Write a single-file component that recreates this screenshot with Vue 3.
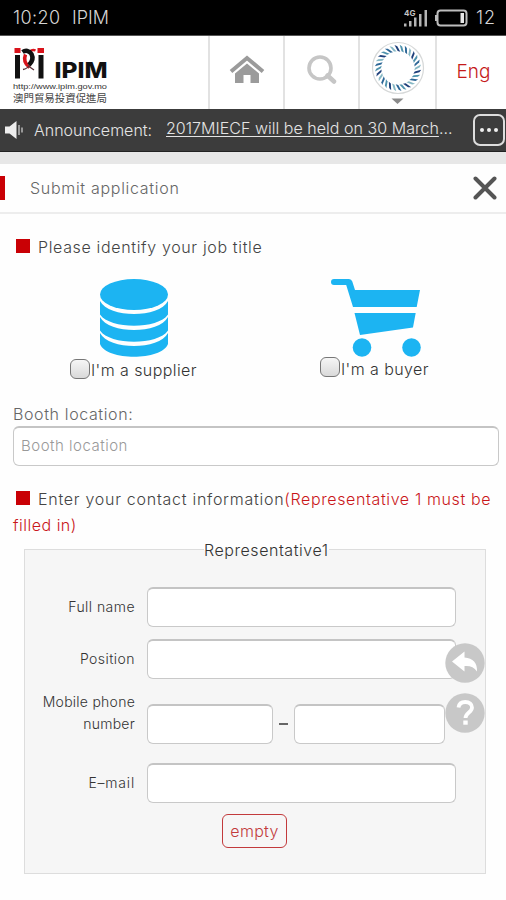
<script setup>
import { ref } from 'vue'

const booth = ref('')
const blades = Array.from({ length: 28 }, (_, i) => ({
  angle: (i * 360) / 28,
  tone: ['#1d3f7a', '#4f93ad', '#2c6696', '#86b8c4'][i % 4],
}))
</script>

<template>
  <div class="screen">
    <div class="status">
      <span class="clock">10:20</span>
      <span class="app">IPIM</span>
      <svg class="signal" width="26" height="20" viewBox="0 0 26 20">
        <text x="1" y="7.5" class="net">4G</text>
        <g fill="#b4b4b4">
          <rect x="1" y="15.500" width="2.500" height="3" />
          <rect x="6" y="13" width="2.500" height="5.500" />
          <rect x="11" y="9.500" width="2.500" height="9" />
          <rect x="16" y="6" width="2.500" height="12.500" />
          <rect x="21.500" y="2" width="2.500" height="16.500" />
        </g>
      </svg>
      <svg class="battery" width="33" height="18" viewBox="0 0 33 18">
        <rect x="2.5" y="1.5" width="29" height="15" rx="3" fill="none" stroke="#bdbdbd" stroke-width="2" />
        <rect x="0" y="6" width="2" height="6" fill="#bdbdbd" />
        <rect x="25.5" y="4" width="3.5" height="10" fill="#e8e8e8" />
      </svg>
      <span class="level">12</span>
    </div>

    <header class="header">
      <div class="brand">
        <svg width="98" height="58" viewBox="0 0 98 58">
          <g fill="#111">
            <rect x="2" y="8" width="5" height="23.500" />
            <rect x="25.500" y="8" width="5" height="23.500" />
          </g>
          <g fill="#d9131b">
            <rect x="1.500" y="1" width="6" height="5" />
            <rect x="24.500" y="1" width="6.500" height="5" />
          </g>
          <path d="M22.500 3.500q-3-1.500-5.500 1" stroke="#d9131b" stroke-width="2.500" fill="none" />
          <path d="M12.500 7.500c-2 5-1 9 4 13" stroke="#d9131b" stroke-width="3.500" fill="none" />
          <path d="M9.500 5c3-2 7-1.500 9 2 2 4 1.500 7-2.500 11" stroke="#111" stroke-width="4.500" fill="none" />
          <path d="M10 22.500q4-.5 6.500-4.500M16 19.500l5 3.500" stroke="#5a3038" stroke-width="1.300" fill="none" />
          <text x="41.500" y="31" class="brand-name" textLength="53" lengthAdjust="spacingAndGlyphs">IPIM</text>
          <text x="0" y="41.500" class="brand-url" textLength="94" lengthAdjust="spacingAndGlyphs">http://www.ipim.gov.mo</text>
          <text x="0" y="54.500" class="brand-zh" textLength="94" lengthAdjust="spacingAndGlyphs">澳門貿易投資促進局</text>
        </svg>
      </div>
      <div class="cell home">
        <svg width="36" height="29" viewBox="0 0 36 29">
          <path d="M2 16.500L18 3l16 13.500" fill="none" stroke="#9b9b9b" stroke-width="4" />
          <path d="M6 18.500L18 8.500l12 10V28h-8.500v-8h-7v8H6z" fill="#9b9b9b" />
        </svg>
      </div>
      <div class="cell find">
        <svg width="30" height="30" viewBox="0 0 30 30">
          <circle cx="13" cy="13" r="11" fill="none" stroke="#c6c6c6" stroke-width="3.600" />
          <path d="M20.500 20.500l6.500 6" stroke="#c6c6c6" stroke-width="4.500" stroke-linecap="round" />
        </svg>
      </div>
      <div class="cell member">
        <svg width="54" height="66" viewBox="0 0 54 66">
          <circle cx="27" cy="27" r="25.500" fill="#fff" stroke="#d6d8d8" stroke-width="1.200" />
          <g v-for="b in blades" :key="b.angle" :transform="`rotate(${b.angle} 27 27)`">
            <path d="M23.500 4l2.800 1.200 3 5.500-2.600-.8z" :fill="b.tone" />
          </g>
          <path d="M20.500 57.500h12L26.500 63z" fill="#8a8a8a" />
        </svg>
      </div>
      <div class="cell lang">Eng</div>
    </header>

    <div class="notice">
      <svg class="speaker" width="20" height="20" viewBox="0 0 20 20">
        <path d="M0 6.500h4.500L11.500 1v18l-7-5.500H0z" fill="#eee" />
        <path d="M14 5v10M17 7.500v5" stroke="#aaa" stroke-width="1.700" />
      </svg>
      <span class="notice-label">Announcement:</span>
      <span class="notice-link"><u>2017MIECF will be held on 30 March</u>...</span>
      <span class="more"><i></i><i></i><i></i></span>
    </div>

    <div class="band"></div>

    <div class="title">
      <span class="marker"></span>
      <span class="title-text">Submit application</span>
      <svg class="close" width="24" height="24" viewBox="0 0 24 24">
        <path d="M2.500 2.500l19 19M21.500 2.500l-19 19" stroke="#555" stroke-width="4" stroke-linecap="round" />
      </svg>
    </div>

    <main class="content">
      <div class="heading"><span class="square"></span><span class="h-job">Please identify your job title</span></div>

      <div class="roles">
        <div class="role supplier">
          <svg width="68" height="78" viewBox="0 0 68 78">
            <g fill="#1cb4f2">
              <ellipse cx="34" cy="15.500" rx="34" ry="15.500" />
              <path d="M0 22C9 39.300 59 39.300 68 22v13.500C58 50.500 10 50.500 0 35.500z" />
              <path d="M0 38C9 55.300 59 55.300 68 38v13.500C58 66.500 10 66.500 0 51.500z" />
              <path d="M0 54C9 71.300 59 71.300 68 54v11C62 82 6 82 0 65z" />
            </g>
          </svg>
          <label class="option"><span class="box"></span><span class="supplier-text">I'm a supplier</span></label>
        </div>
        <div class="role buyer">
          <svg width="90" height="78" viewBox="0 0 90 78">
            <g fill="#1cb4f2">
              <path d="M3 0h15q2.500 0 3.300 2.500L24 11h65l-3.300 17H22L15.200 6H3a3 3 0 0 1 0-6z" />
              <path d="M23.500 34h61.200L82 48.500 29 56z" />
              <circle cx="31" cy="68.500" r="9.300" />
              <circle cx="80.500" cy="68.500" r="9.300" />
            </g>
          </svg>
          <label class="option"><span class="box"></span><span class="buyer-text">I'm a buyer</span></label>
        </div>
      </div>

      <label class="booth">
        <span class="booth-label">Booth location:</span>
        <input v-model="booth" class="field booth-input" placeholder="Booth location" />
      </label>

      <div class="heading contact">
        <span class="square"></span><span class="h-contact">Enter your contact information</span><span class="red r-one">(Representative 1 must be</span>
        <div class="red r-two">filled in)</div>
      </div>

      <section class="panel">
        <div class="legend"><span>Representative1</span></div>
        <div class="row name"><span class="label l-name">Full name</span><input class="field wide" /></div>
        <div class="row position"><span class="label l-position">Position</span><input class="field wide" /></div>
        <div class="row phone">
          <span class="label l-phone">Mobile phone<br />number</span>
          <input class="field code" /><span class="dash"></span><input class="field number" />
        </div>
        <div class="row mail"><span class="label l-mail">E–mail</span><input class="field wide" /></div>
        <button class="empty">empty</button>
        <div class="floating">
          <svg width="40" height="40" viewBox="0 0 40 40">
            <circle cx="20" cy="20" r="19.700" fill="#c8c8c8" />
            <path d="M7 18.500L19.500 8.500v6C28 15 32.500 20 32 28.500c-3-4.500-7-6-12.500-5.500v5.500z" fill="#fff" />
          </svg>
          <svg width="40" height="40" viewBox="0 0 40 40">
            <circle cx="20" cy="20" r="19.700" fill="#c8c8c8" />
            <path d="M13.500 14.500c.5-4 3-5.500 6.800-5.500 4 0 6.700 2.200 6.700 5.500 0 5-6.500 5-6.500 10.500" fill="none" stroke="#fff" stroke-width="3.800" />
            <rect x="18.300" y="27.500" width="4.400" height="4.200" fill="#fff" />
          </svg>
        </div>
      </section>
    </main>
  </div>
</template>

<style>
body { background: #fefefe; }
</style>

<style scoped>
* { box-sizing: border-box; }
.screen {
  width: 506px; height: 900px; overflow: hidden; background: #fefefe; color: #444;
  font-family: Inter, "Noto Sans CJK TC", sans-serif; font-weight: 300; font-size: 16px;
  display: flex; flex-direction: column;
}
svg { display: block; flex: none; }
span { white-space: nowrap; }
.status {
  height: 35px; flex: none; background: #000; color: #d4d4d4; display: flex; align-items: center;
  padding: 0 9px 0 13px; font-size: 18px; line-height: 36px;
}
.clock { width: 59px; letter-spacing: 0.4px; }
.app { flex: 1; }
.signal { margin-right: 6px; }
.battery { margin-right: 8px; }
.level { width: 21px; letter-spacing: 0.8px; }
.net { font: 700 8px Inter, sans-serif; fill: #c4c4c4; }
.header { height: 74px; flex: none; display: flex; background: #fff; border-top: 1px solid #555; }
.brand { width: 208px; padding: 11px 0 0 13px; }
.brand-name { font: 800 22px Inter, sans-serif; fill: #111; }
.brand-url { font: 400 7.500px "Liberation Sans", sans-serif; fill: #333; }
.brand-zh { font: 400 10.500px "Noto Sans CJK TC", sans-serif; fill: #444; }
.cell { border-left: 2px solid #e2e2e2; display: flex; align-items: center; justify-content: center; }
.home { width: 75px; padding-bottom: 7px; }
.find { width: 75px; padding-bottom: 5px; }
.member { width: 77px; align-items: flex-start; padding-top: 5px; }
.lang { width: 71px; color: #c51a1a; font-size: 19px; padding-left: 4px; padding-bottom: 3px; }
.notice {
  height: 43px; flex: none; background: #3c3c3c; color: #e4e4e4; display: flex; align-items: center;
  padding: 0 1px 0 5px; border-bottom: 1px solid #222; font-size: 16px;
}
.speaker { margin-right: 9px; }
.notice-label { width: 132px; }
.notice-link { flex: 1; padding-bottom: 4px; letter-spacing: 0.03px; }
.notice-link u { text-underline-offset: 2px; text-decoration-thickness: 1px; }
.more {
  width: 32px; height: 32px; border: 2px solid #ddd; border-radius: 7px;
  display: flex; align-items: center; justify-content: center; gap: 3px;
}
.more i { width: 4px; height: 4px; border-radius: 2px; background: #eee; }
.band { height: 12px; flex: none; background: #e7e7e7; }
.title {
  height: 50px; flex: none; display: flex; align-items: center; border-bottom: 2px solid #ededed;
  padding-right: 9px; color: #666;
}
.marker { width: 5px; height: 24px; background: #c90005; margin-right: 25px; }
.title-text { flex: 1; letter-spacing: 0.7px; }
.content { flex: 1; padding: 20px 7px 0 13px; }
.heading { line-height: 26px; padding-left: 3px; }
.h-job { letter-spacing: 0.65px; }
.h-contact { letter-spacing: 0.73px; }
.r-one { letter-spacing: 0.62px; }
.square { display: inline-block; width: 14px; height: 14px; background: #c90005; margin-right: 8px; vertical-align: 0; }
.roles { display: flex; height: 102px; margin-top: 19px; }
.supplier { padding-left: 57px; width: 307px; }
.supplier svg { margin-left: 30px; }
.buyer svg { margin-left: 11px; }
.option { display: flex; align-items: center; height: 20px; margin-top: 2px; color: #333; letter-spacing: 0.42px; }
.supplier-text { padding-top: 2px; }
.buyer-text { padding-top: 3px; }
.buyer .option { margin-top: 0; }
.box {
  width: 20px; height: 20px; border: 1.500px solid #777; border-radius: 6px; margin-right: 1px;
  background: linear-gradient(#f6f6f6, #d9d9d9);
}
.booth { display: block; margin-top: 23px; }
.booth-label { display: block; height: 22px; line-height: 20px; color: #666; letter-spacing: 0.62px; }
.field {
  display: block; height: 40px; border: 1px solid #c9c9c9; border-top: 2px solid #c4c4c4; border-radius: 6px;
  background: #fff; font: inherit; padding: 0 7px; margin: 0; min-width: 0; outline: none;
}
.field::placeholder { color: #999; opacity: 1; }
.booth-input { width: 486px; font-size: 15px; letter-spacing: 0.5px; padding-bottom: 2px; }
.contact { margin-top: 20px; }
.red { color: #c9161a; }
.r-two { margin-left: -3px; letter-spacing: 0.5px; }
.panel {
  position: relative; width: 462px; height: 325px; margin: 11px 0 0 11px; background: #f6f6f6;
  border: 1px solid #ddd; color: #333;
}
.legend { height: 20px; margin-top: -10px; line-height: 20px; padding-left: 179px; letter-spacing: 0.55px; }
.legend span { display: inline-block; background: linear-gradient(#fefefe 50%, #f6f6f6 50%); }
.row { display: flex; align-items: center; height: 40px; }
.name { margin-top: 27px; }
.position { margin-top: 12px; }
.phone { margin-top: 25px; }
.mail { margin-top: 19px; }
.label { width: 110px; margin-right: 12px; text-align: right; font-size: 14px; line-height: 22px; letter-spacing: 0.45px; }
.phone .label { padding-bottom: 22px; letter-spacing: 0.25px; }
.mail .label { letter-spacing: 0.8px; }
.wide { width: 309px; }
.code { width: 126px; }
.dash { width: 9px; height: 1.500px; margin: 0 6px; background: #666; }
.number { width: 151px; }
.empty {
  display: block; width: 65px; height: 34px; margin: 11px 0 0 197px; padding: 0; border: 1.500px solid #c23a3c;
  border-radius: 6px; background: transparent; color: #c23a3c; font: inherit; letter-spacing: 0.3px;
}
.floating { position: absolute; left: 420px; top: 93px; display: grid; gap: 10px; }
</style>
